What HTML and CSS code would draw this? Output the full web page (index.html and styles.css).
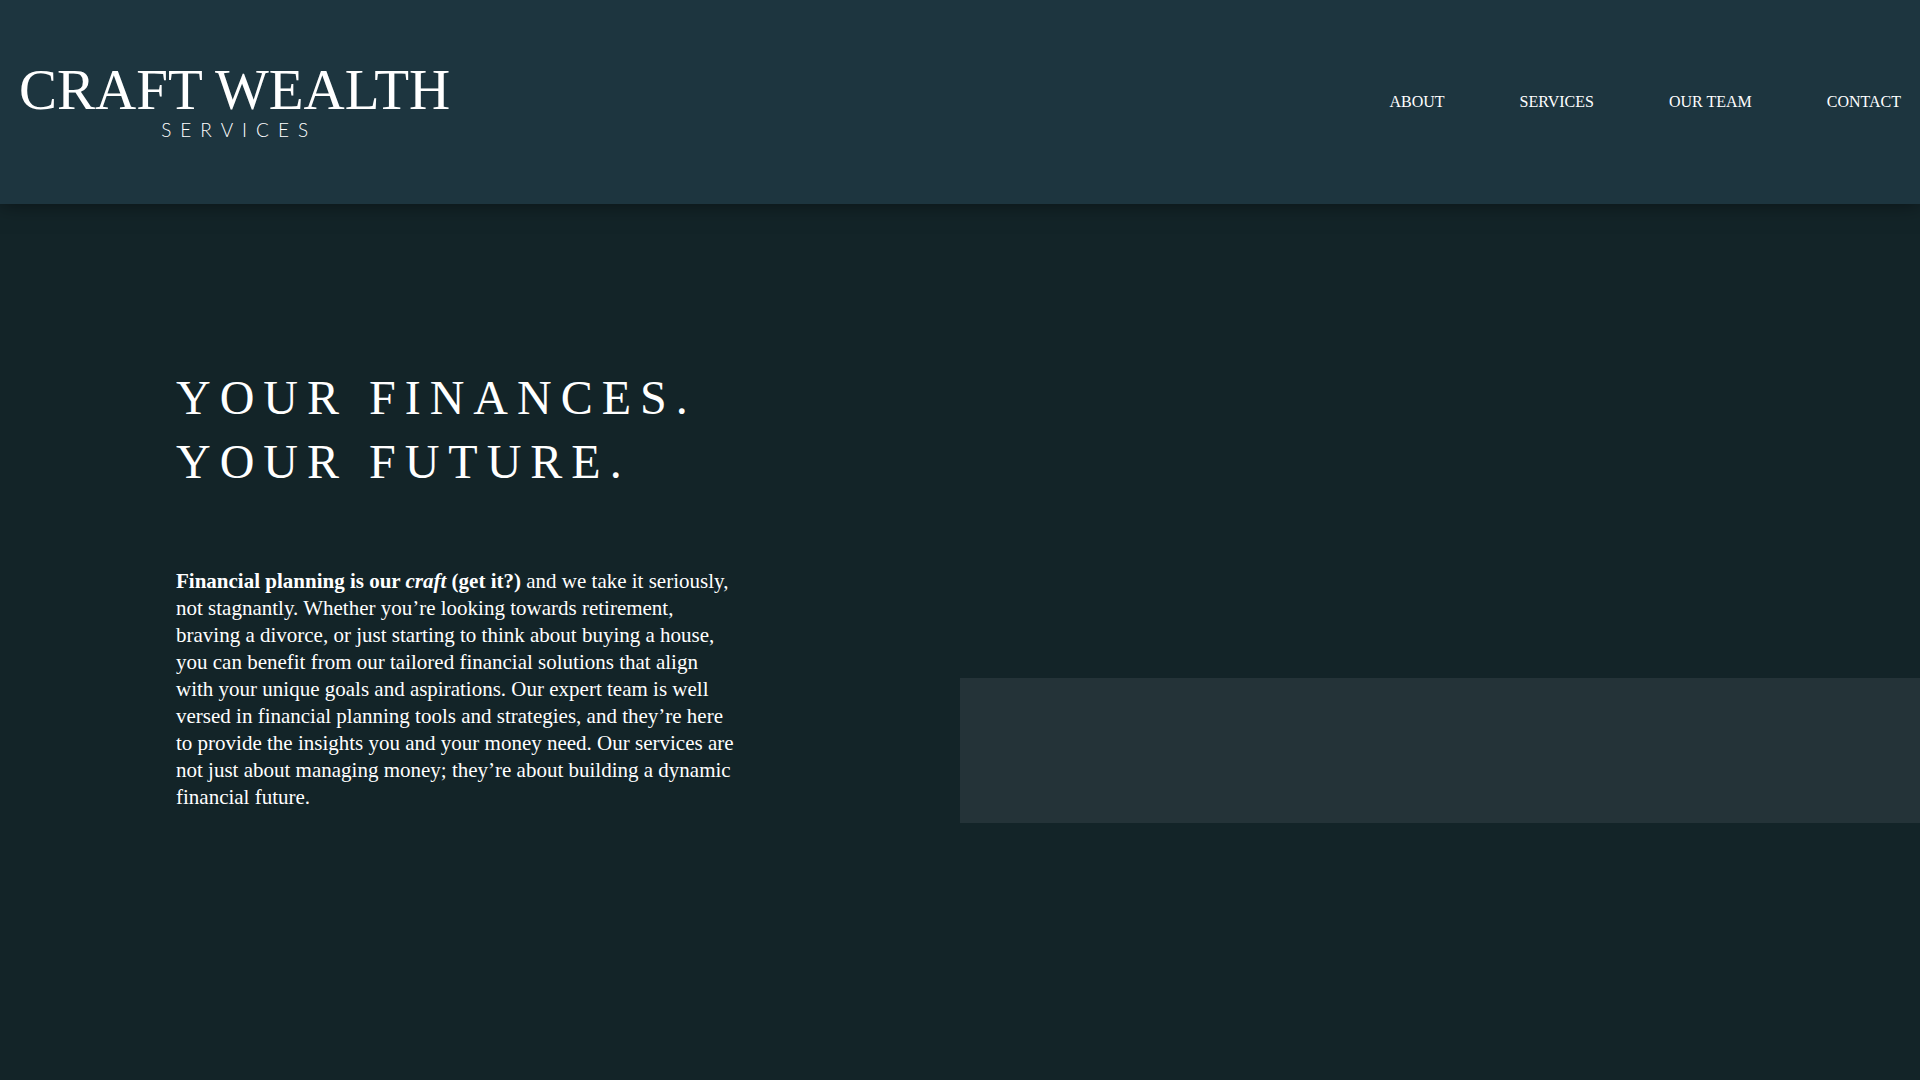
FILE: index.html
```html
<!DOCTYPE html>
<html lang="en">
<head>
<meta charset="utf-8">
<meta name="viewport" content="width=device-width, initial-scale=1">
<title>Craft Wealth Services</title>
<link rel="stylesheet" href="styles.css">
</head>
<body>
<header class="site-header">
  <a class="logo" href="#">
    <span class="logo-name">CRAFT WEALTH</span>
    <span class="logo-tag">SERVICES</span>
  </a>
  <nav class="site-nav" aria-label="Main">
    <a href="#about">ABOUT</a>
    <a href="#services">SERVICES</a>
    <a href="#team">OUR TEAM</a>
    <a href="#contact">CONTACT</a>
  </nav>
</header>
<main class="hero">
  <section class="hero-copy">
    <h1>YOUR FINANCES.<br>YOUR FUTURE.</h1>
    <p><strong>Financial planning is our <em>craft</em> (get it?)</strong> and we take it seriously, not stagnantly. Whether you’re looking towards retirement, braving a divorce, or just starting to think about buying a house, you can benefit from our tailored financial solutions that align with your unique goals and aspirations. Our expert team is well versed in financial planning tools and strategies, and they’re here to provide the insights you and your money need. Our services are not just about managing money; they’re about building a dynamic financial future.</p>
  </section>
  <div class="hero-panel"></div>
</main>
</body>
</html>
```
FILE: styles.css
```css
* {
  box-sizing: border-box;
}

body {
  margin: 0;
  min-height: 100vh;
  background: #132428;
  color: #fff;
  font-family: "Liberation Serif", "Times New Roman", serif;
}

.site-header {
  position: relative;
  display: flex;
  align-items: center;
  justify-content: space-between;
  min-height: 204px;
  padding: 0 19px;
  background: #1d353f;
  box-shadow: 0 0 20px rgba(0, 0, 0, 0.5);
}

.logo {
  display: flex;
  flex-direction: column;
  align-items: center;
  color: #fff;
  text-decoration: none;
}

.logo-name {
  font-size: 57px;
  line-height: 56px;
}

.logo-tag {
  padding-left: 9px;
  font-family: Lato, sans-serif;
  font-size: 19px;
  font-weight: 300;
  line-height: 24px;
  letter-spacing: 9px;
}

.site-nav {
  display: flex;
  flex-wrap: wrap;
  gap: 16px 75px;
}

.site-nav a {
  color: #fff;
  font-size: 16px;
  line-height: 24px;
  text-decoration: none;
}

.hero {
  display: grid;
  grid-template-columns: 1fr 1fr;
  align-items: end;
  padding-top: 162px;
}

.hero-copy {
  max-width: 738px;
  padding-left: 176px;
}

.hero-copy h1 {
  margin: 0 0 74px;
  font-size: 48px;
  font-weight: 400;
  line-height: 64px;
  letter-spacing: 9px;
}

.hero-copy p {
  margin: 0 0 12px;
  font-size: 21px;
  line-height: 27px;
}

.hero-panel {
  height: 145px;
  background: #243338;
}
```
